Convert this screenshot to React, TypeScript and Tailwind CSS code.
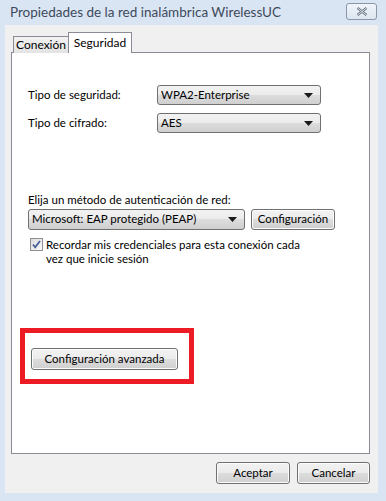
import React from 'react';

const font = { fontFamily: 'Lato, "Noto Sans", sans-serif' };

function Arrow() {
  return (
    <svg width="9" height="5" viewBox="0 0 9 5" className="shrink-0">
      <path d="M0 0h9L4.5 5z" fill="#1a1a1a" />
    </svg>
  );
}

function Combo({ value, className }: { value: string; className: string }) {
  return (
    <div
      className={`flex items-center justify-between rounded-[3px] border border-[#707070] bg-[linear-gradient(#f2f2f2_0%,#ebebeb_50%,#dddddd_50%,#cfcfcf_100%)] pl-[3px] pr-[7px] text-[11.5px] text-black ${className}`}
    >
      <span className="leading-none">{value}</span>
      <Arrow />
    </div>
  );
}

function Btn({ label, className }: { label: string; className: string }) {
  return (
    <button
      className={`flex items-center justify-center rounded-[3px] border border-[#707070] bg-[linear-gradient(#f2f2f2_0%,#ebebeb_50%,#dddddd_50%,#cfcfcf_100%)] text-[11.5px] leading-none text-black shadow-[inset_0_0_0_1px_#fcfcfc] ${className}`}
    >
      {label}
    </button>
  );
}

export default function App() {
  return (
    <div className="flex h-[501px] w-[386px] flex-col bg-[#dae5f3]" style={font}>
      <div className="flex h-[25px] items-center justify-between pl-[10px] pr-[9px]">
        <span className="text-[13.5px] leading-none text-[#3d4a5c]">
          Propiedades de la red inalámbrica WirelessUC
        </span>
        <div className="mt-[-2px] flex h-[17px] w-[31px] items-center justify-center rounded-[3px] border border-[#8a97a8] bg-[linear-gradient(#f1f5fa,#dde6f1)]">
          <svg width="12" height="9" viewBox="0 0 12 9">
            <path d="M1.5 1l9 7M10.5 1l-9 7" stroke="#6b7686" strokeWidth="2.4" />
            <path d="M1.5 1l9 7M10.5 1l-9 7" stroke="#f4f6f9" strokeWidth="0.8" />
          </svg>
        </div>
      </div>

      <div className="ml-[5px] mr-[8px] flex h-[468px] flex-col bg-[#f0f0f0] pl-[6px] pr-[8px] pt-[7px]">
        <div className="relative z-10 -mb-px flex h-[21px] items-end pl-[2px]">
          <div className="flex h-[17px] w-[56px] items-center justify-center border border-b-0 border-[#898c95] bg-[linear-gradient(#f2f2f2,#e3e3e3)] text-[12px] leading-none text-black">
            Conexión
          </div>
          <div className="-ml-px flex h-[21px] w-[64px] items-start justify-center border border-b-0 border-[#898c95] bg-white pt-[4px] text-[12px] leading-none text-black">
            Seguridad
          </div>
        </div>

        <div className="flex h-[402px] flex-col border border-[#898c95] bg-white pl-[16px] text-[11.5px] leading-none text-black">
          <div className="mt-[32px] flex items-center">
            <span className="w-[129px]">Tipo de seguridad:</span>
            <Combo value="WPA2-Enterprise" className="h-[20px] w-[164px]" />
          </div>
          <div className="mt-[8px] flex items-center">
            <span className="w-[129px]">Tipo de cifrado:</span>
            <Combo value="AES" className="h-[20px] w-[164px]" />
          </div>

          <span className="mt-[61px]">Elija un método de autenticación de red:</span>
          <div className="mt-[3px] flex items-center gap-[6px]">
            <Combo value="Microsoft: EAP protegido (PEAP)" className="h-[21px] w-[217px]" />
            <Btn label="Configuración" className="h-[21px] w-[84px]" />
          </div>

          <div className="mt-[8px] flex items-start pl-[2px]">
            <div className="flex h-[13px] w-[13px] shrink-0 items-center justify-center border border-[#8e8f8f] bg-[linear-gradient(135deg,#dcdcdc,#fafafa)]">
              <svg width="9" height="9" viewBox="0 0 9 9">
                <path d="M1 4.5l2.2 2.7L8 1" fill="none" stroke="#4a5f97" strokeWidth="1.8" />
              </svg>
            </div>
            <span className="ml-[3px] leading-[14px]">
              Recordar mis credenciales para esta conexión cada
              <br />
              vez que inicie sesión
            </span>
          </div>

          <div className="ml-[-8px] mt-[62px] flex h-[56px] w-[174px] items-start border-[5px] border-[#ed1c24] pl-[6px] pt-[15px]">
            <Btn label="Configuración avanzada" className="h-[22px] w-[147px]" />
          </div>
        </div>

        <div className="mt-[8px] flex justify-end gap-[7px]">
          <Btn label="Aceptar" className="h-[22px] w-[74px]" />
          <Btn label="Cancelar" className="h-[22px] w-[73px]" />
        </div>
      </div>
    </div>
  );
}
